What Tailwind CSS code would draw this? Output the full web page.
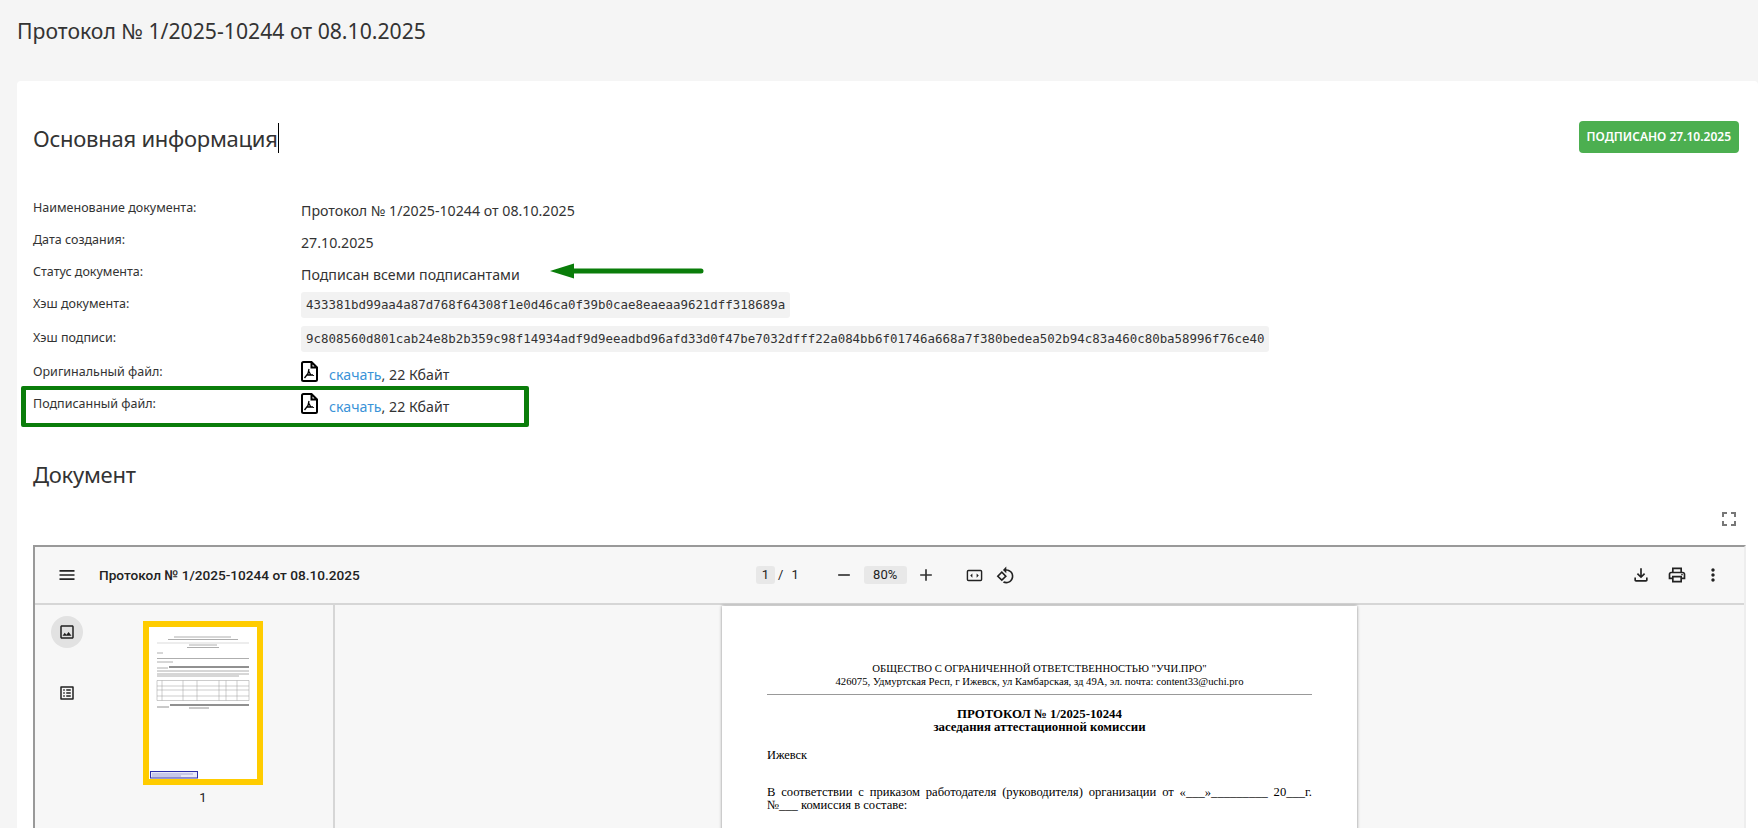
<!DOCTYPE html>
<html lang="ru">
<head>
<meta charset="utf-8">
<title>Протокол № 1/2025-10244</title>
<script src="https://cdn.jsdelivr.net/npm/@tailwindcss/browser@4"></script>
</head>
<body class="h-[828px] overflow-hidden bg-[#f5f5f5] font-['Noto_Sans',sans-serif] text-[#333]">

<h1 class="h-[81px] pl-[17px] pt-[15px] text-[21.200px] leading-[32px] font-normal text-[#333]">Протокол № 1/2025-10244 от 08.10.2025</h1>

<div class="ml-[17px] h-[747px] overflow-hidden rounded-t bg-white pl-4 pr-3">
  <!-- Основная информация -->
  <div class="flex h-[115px] justify-between pt-[40px]">
    <h2 class="mt-px flex h-[32px] items-center text-[22px] tracking-[-0.26px] font-normal">Основная информация<span class="h-[30px] w-px bg-black"></span></h2>
    <span class="mr-[7px] flex h-[32px] items-center rounded bg-[#4caf50] px-2 text-[12px] font-semibold text-white">ПОДПИСАНО 27.10.2025</span>
  </div>

  <div class="grid grid-cols-[268px_1fr] text-[14.200px]">
    <div class="h-[32px] text-[12.500px] leading-[24px]">Наименование документа:</div>
    <div class="h-[32px] leading-[29px]">Протокол № 1/2025-10244 от 08.10.2025</div>

    <div class="h-[32px] text-[12.500px] leading-[24px]">Дата создания:</div>
    <div class="h-[32px] leading-[29px]">27.10.2025</div>

    <div class="h-[32px] text-[12.500px] leading-[24px]">Статус документа:</div>
    <div class="relative h-[32px] leading-[29px]">Подписан всеми подписантами
      <svg class="absolute left-[249px] top-[3px]" width="155" height="16" viewBox="0 0 155 16"><path d="M0 8 24 .5V5.500H151a2.500 2.500 0 0 1 0 5H24V15.500Z" fill="#0a7d0a"/></svg>
    </div>

    <div class="h-[34px] text-[12.500px] leading-[24px]">Хэш документа:</div>
    <div class="h-[34px]"><code class="inline-block h-[26px] rounded-[3px] bg-[#f2f2f2] px-[5px] font-['DejaVu_Sans_Mono',monospace] text-[12.450px] leading-[26px]">433381bd99aa4a87d768f64308f1e0d46ca0f39b0cae8eaeaa9621dff318689a</code></div>

    <div class="h-[34px] text-[12.500px] leading-[24px]">Хэш подписи:</div>
    <div class="h-[34px]"><code class="inline-block h-[26px] rounded-[3px] bg-[#f2f2f2] px-[5px] font-['DejaVu_Sans_Mono',monospace] text-[12.450px] leading-[26px]">9c808560d801cab24e8b2b359c98f14934adf9d9eeadbd96afd33d0f47be7032dfff22a084bb6f01746a668a7f380bedea502b94c83a460c80ba58996f76ce40</code></div>

    <div class="h-[32px] text-[12.500px] leading-[24px]">Оригинальный файл:</div>
    <div class="flex h-[32px] items-start gap-[11px] leading-[29px]">
      <svg class="mt-[1px]" width="17" height="21" viewBox="0 0 17 21"><path d="M2.500 1H10.500L16 6.500V18.500a1.500 1.500 0 0 1-1.500 1.500H2.500A1.500 1.500 0 0 1 1 18.500V2.500A1.500 1.500 0 0 1 2.500 1ZM10.500 1V6.500H16" fill="none" stroke="#000" stroke-width="2"/><path d="M3.500 17 7 12.500 8 8M8 10.500 9.500 13.500 13 14.500M6 14 12 14" fill="none" stroke="#000" stroke-width="1.300"/></svg>
      <span><a class="text-[#3a93d8]" href="#">скачать</a>, 22 Кбайт</span>
    </div>

    <div class="h-[32px] text-[12.500px] leading-[24px]">Подписанный файл:</div>
    <div class="flex h-[32px] items-start gap-[11px] leading-[29px]">
      <svg class="mt-[1px]" width="17" height="21" viewBox="0 0 17 21"><path d="M2.500 1H10.500L16 6.500V18.500a1.500 1.500 0 0 1-1.500 1.500H2.500A1.500 1.500 0 0 1 1 18.500V2.500A1.500 1.500 0 0 1 2.500 1ZM10.500 1V6.500H16" fill="none" stroke="#000" stroke-width="2"/><path d="M3.500 17 7 12.500 8 8M8 10.500 9.500 13.500 13 14.500M6 14 12 14" fill="none" stroke="#000" stroke-width="1.300"/></svg>
      <span><a class="text-[#3a93d8]" href="#">скачать</a>, 22 Кбайт</span>
    </div>
  </div>

  <!-- зелёная рамка -->
  <div class="relative">
    <div class="absolute -top-[38px] left-[-12px] h-[41px] w-[508px] rounded-[2px] border-x-[5px] border-y-[4px] border-[#0a7d0a]"></div>
  </div>

  <h2 class="mt-[34px] h-[32px] text-[22px] tracking-[-0.26px] leading-[32px] font-normal">Документ</h2>
  <div class="flex h-[39px] justify-end pr-[5px] pt-[17px]">
    <svg width="24" height="24" viewBox="0 0 24 24" fill="#777"><path d="M7 14H5v5h5v-2H7v-3zm-2-4h2V7h3V5H5v5zm12 7h-3v2h5v-5h-2v3zM14 5v2h3v3h2V5h-5z"/></svg>
  </div>

  <!-- просмотр PDF -->
  <div class="mt-[16px] h-[400px] w-[1713px] overflow-hidden border-2 border-[#999] border-r-[#eee] bg-[#f7f7f7] font-['Roboto',sans-serif] text-[#222]">
    <div class="flex h-[58px] items-center border-b-2 border-[#d6d6d6]">
      <svg class="ml-[22px]" width="20" height="20" viewBox="0 0 24 24" fill="#222"><path d="M3 18h18v-2H3v2zm0-5h18v-2H3v2zm0-7v2h18V6H3z"/></svg>
      <span class="ml-[22px] w-[657px] text-[13.650px] font-medium whitespace-nowrap">Протокол № 1/2025-10244 от 08.10.2025</span>
      <span class="flex h-[18px] w-[19px] items-center justify-center rounded-[3px] bg-[#e8e8e8] text-[13px]">1</span>
      <span class="ml-[3px] text-[13px]">/</span>
      <span class="ml-[8px] text-[13px]">1</span>
      <svg class="ml-[35px]" width="20" height="20" viewBox="0 0 24 24" fill="#333"><path d="M19 13H5v-2h14v2z"/></svg>
      <span class="ml-[10px] flex h-[18px] w-[43px] items-center justify-center rounded-[3px] bg-[#e8e8e8] text-[13px]">80%</span>
      <svg class="ml-[9px]" width="20" height="20" viewBox="0 0 24 24" fill="#333"><path d="M19 13h-6v6h-2v-6H5v-2h6V5h2v6h6v2z"/></svg>
      <svg class="ml-[30px]" width="17" height="17" viewBox="0 0 24 24" fill="#222"><path d="M3.500 4h17A2.500 2.500 0 0 1 23 6.500v11a2.500 2.500 0 0 1-2.500 2.500h-17A2.500 2.500 0 0 1 1 17.500v-11A2.500 2.500 0 0 1 3.500 4ZM3.500 6a.5.5 0 0 0-.5.5v11a.5.5 0 0 0 .5.5h17a.5.5 0 0 0 .5-.5v-11a.5.5 0 0 0-.5-.5ZM9 9v6l-3-3ZM15 9l3 3-3 3Z"/></svg>
      <svg class="ml-[13px]" width="19" height="19" viewBox="0 0 24 24" fill="#222"><path d="M7.340 6.410L.86 12.900l6.490 6.480 6.490-6.480-6.500-6.490zM3.690 12.900l3.660-3.660L11 12.900l-3.660 3.660-3.650-3.660zm15.670-6.260C17.610 4.880 15.300 4 13 4V.76L8.760 5 13 9.240V6c1.790 0 3.580.68 4.950 2.050 2.730 2.730 2.730 7.170 0 9.900C16.580 19.320 14.790 20 13 20c-.97 0-1.940-.21-2.840-.61l-1.490 1.490C10.020 21.620 11.510 22 13 22c2.300 0 4.610-.88 6.360-2.640 3.520-3.510 3.520-9.210 0-12.720z"/></svg>
      <div class="ml-auto flex items-center gap-[16px] pr-[21px]">
        <svg width="20" height="20" viewBox="0 0 24 24" fill="#222"><path d="M18 15v3H6v-3H4v3c0 1.100.9 2 2 2h12c1.100 0 2-.9 2-2v-3h-2zm-1-4l-1.410-1.410L13 12.170V4h-2v8.170L8.410 9.590 7 11l5 5 5-5z"/></svg>
        <svg width="20" height="20" viewBox="0 0 24 24" fill="#222"><path d="M19 8h-1V3H6v5H5c-1.660 0-3 1.340-3 3v6h4v4h12v-4h4v-6c0-1.660-1.340-3-3-3zM8 5h8v3H8V5zm8 14H8v-4h8v4zm2-4v-2H6v2H4v-4c0-.55.45-1 1-1h14c.55 0 1 .45 1 1v4h-2z"/><circle cx="18" cy="11.500" r="1"/></svg>
        <svg width="20" height="20" viewBox="0 0 24 24" fill="#222"><path d="M12 8c1.100 0 2-.9 2-2s-.9-2-2-2-2 .9-2 2 .9 2 2 2zm0 2c-1.100 0-2 .9-2 2s.9 2 2 2 2-.9 2-2-.9-2-2-2zm0 6c-1.100 0-2 .9-2 2s.9 2 2 2 2-.9 2-2-.9-2-2-2z"/></svg>
      </div>
    </div>

    <div class="flex">
      <!-- боковая панель -->
      <div class="flex h-[300px] w-[300px] shrink-0 border-r-2 border-[#d6d6d6]">
        <div class="flex w-[64px] flex-col items-center pt-[11px]">
          <div class="flex h-[32px] w-[32px] items-center justify-center rounded-full bg-[#e2e2e2]">
            <svg width="18" height="18" viewBox="0 0 24 24" fill="#222"><path d="M19 5v14H5V5h14m0-2H5c-1.100 0-2 .9-2 2v14c0 1.100.9 2 2 2h14c1.100 0 2-.9 2-2V5c0-1.100-.9-2-2-2zm-4.860 8.860l-3 3.870L9 13.140 6 17h12l-3.860-5.140z"/></svg>
          </div>
          <svg class="mt-[36px]" width="18" height="18" viewBox="0 0 24 24" fill="#222"><path d="M19 5v14H5V5h14m1.100-2H3.900c-.5 0-.9.4-.9.9v16.200c0 .4.4.9.9.9h16.200c.4 0 .9-.5.9-.9V3.900c0-.5-.5-.9-.9-.9zM11 7h6v2h-6V7zm0 4h6v2h-6v-2zm0 4h6v2h-6zM7 7h2v2H7zm0 4h2v2H7zm0 4h2v2H7z"/></svg>
        </div>
        <div class="ml-[44px] flex flex-col items-center pt-[16px]">
          <svg class="border-[6px] border-[#ffcc00] bg-white box-content" width="108" height="152" viewBox="0 0 108 152">
            <g stroke="#888" stroke-width=".9" opacity=".75">
              <path d="M25 10H82M19 12.500H89M40 18H68M38 20.500H70M8 26H14M8 31.500H100M8 35H24M8 41H19M8 44H100M8 47H100M8 49H90"/>
              <path d="M8 16H100" stroke="#ccc"/>
            </g>
            <path d="M20 40H100M21 78H100" stroke="#222" stroke-width="1"/>
            <path d="M8 53.500H100V73.500H8ZM8 59H100M8 63H100M8 69H100M13 53.500V73.500M34 53.500V73.500M48 53.500V73.500M70 53.500V73.500M77 53.500V73.500M88 53.500V73.500" fill="none" stroke="#999" stroke-width=".5"/>
            <path d="M8 80H20M40 81H60" stroke="#888" stroke-width=".9"/>
            <rect x="1.500" y="144.500" width="47" height="6.500" fill="#e8e8f8" stroke="#2c2ca8" stroke-width="1"/>
            <path d="M3 147H44M3 149H32" stroke="#8888cc" stroke-width=".7"/>
          </svg>
          <span class="mt-[5px] text-[13px] leading-[16px]">1</span>
        </div>
      </div>

      <!-- страница -->
      <div class="flex flex-1 justify-center">
        <div class="mt-px h-[400px] w-[635px] shrink-0 bg-white px-[45px] pt-[56px] font-['Liberation_Serif',serif] text-[10.700px] leading-[12.500px] text-black shadow-[0_0_3px_rgba(0,0,0,.45)]">
          <p class="text-center">ОБЩЕСТВО С ОГРАНИЧЕННОЙ ОТВЕТСТВЕННОСТЬЮ "УЧИ.ПРО"</p>
          <p class="text-center">426075, Удмуртская Респ, г Ижевск, ул Камбарская, зд 49А, эл. почта: content33@uchi.pro</p>
          <div class="mt-[7px] h-px bg-[#999]"></div>
          <p class="mt-[13px] text-center text-[12.800px] font-bold">ПРОТОКОЛ № 1/2025-10244</p>
          <p class="text-center text-[12.800px] font-bold">заседания аттестационной комиссии</p>
          <p class="mt-[16px] text-[12.400px]">Ижевск</p>
          <p class="mt-[24px] text-justify text-[12.600px] [text-align-last:justify]">В соответствии с приказом работодателя (руководителя) организации от «___»_________ 20___г.</p>
          <p class="mt-[1px] text-[12.600px]">№___ комиссия в составе:</p>
        </div>
      </div>
    </div>
  </div>
</div>
</body>
</html>
